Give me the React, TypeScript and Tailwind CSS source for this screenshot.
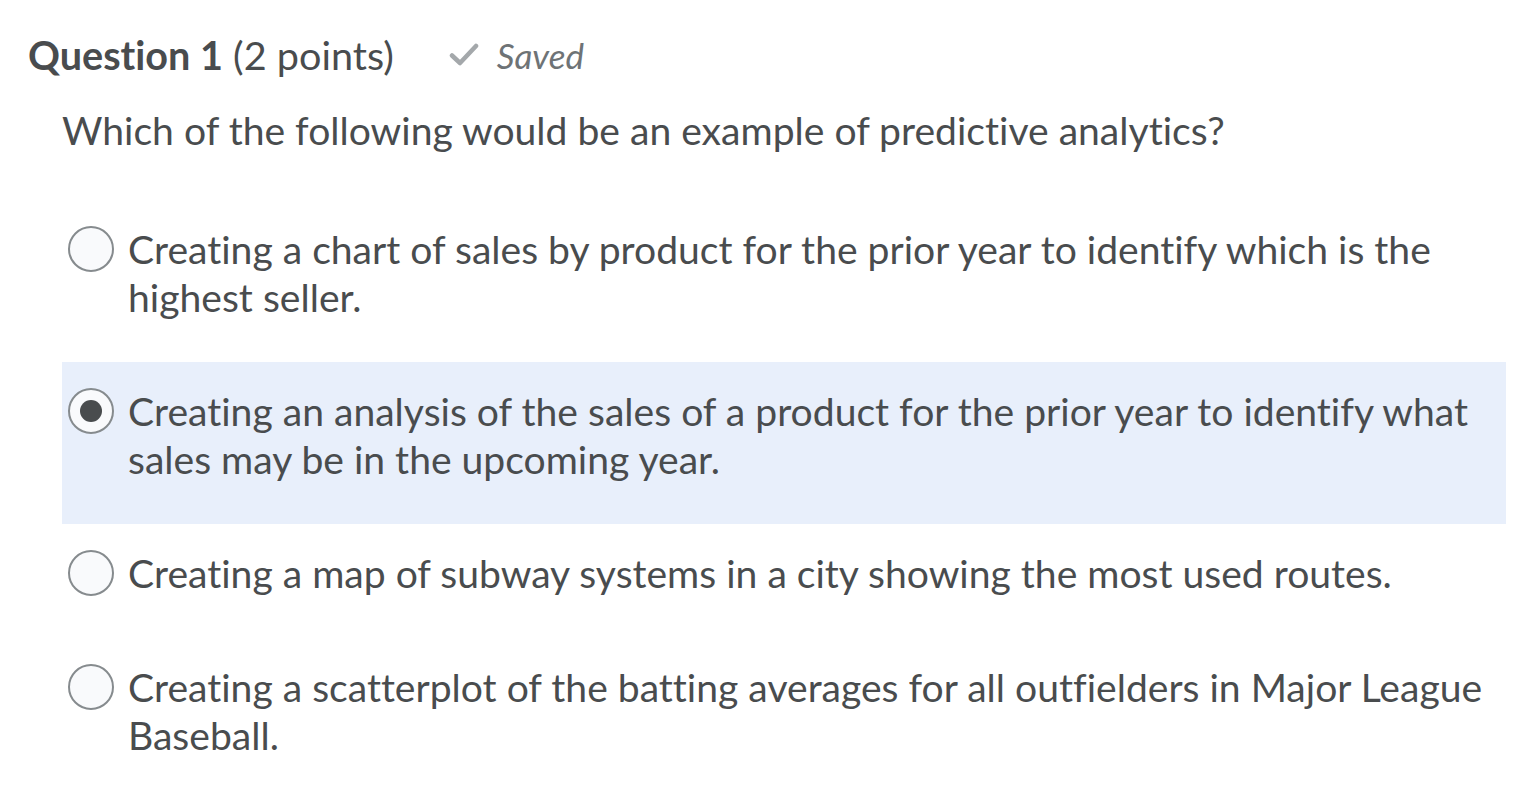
import { useState } from "react";

const options = [
  "Creating a chart of sales by product for the prior year to identify which is the highest seller.",
  "Creating an analysis of the sales of a product for the prior year to identify what sales may be in the upcoming year.",
  "Creating a map of subway systems in a city showing the most used routes.",
  "Creating a scatterplot of the batting averages for all outfielders in Major League Baseball.",
];

function Radio({ checked }: { checked: boolean }) {
  return (
    <span className="mt-[1px] flex h-[46px] w-[46px] shrink-0 items-center justify-center rounded-full border-2 border-[#868b8e] bg-[#f9fafc]">
      {checked && <span className="h-[22px] w-[22px] rounded-full bg-[#494c4e]" />}
    </span>
  );
}

export default function App() {
  const [selected, setSelected] = useState(1);

  return (
    <div className="min-h-screen bg-white font-['Lato',sans-serif] text-[#494c4e] [font-variant-ligatures:none]">
      <div className="px-[28px] pt-[29px]">
        <div className="flex items-center">
          <h2 className="text-[39.6px] leading-[48px]">
            <span className="font-bold">Question 1</span> (2 points)
          </h2>
          <span className="ml-[55px] flex items-center gap-[18px] text-[#6e7376]">
            <svg width="30" height="24" viewBox="0 0 30 24" fill="none">
              <path d="M3 12.5 L11 20 L27 3" stroke="#a4a8ab" strokeWidth="4.5" strokeLinecap="round" strokeLinejoin="round" />
            </svg>
            <span className="text-[35px] italic">Saved</span>
          </span>
        </div>

        <p className="mt-[24px] pl-[34px] text-[39.1px] leading-[48px]">
          Which of the following would be an example of predictive analytics?
        </p>

        <div className="mt-[46px] pl-[34px] pr-[2px]">
          {options.map((text, i) => (
            <label
              key={i}
              onClick={() => setSelected(i)}
              className={`flex cursor-pointer gap-[14px] pl-[6px] pr-[20px] pt-[25px] pb-[41px] ${
                selected === i ? "bg-[#e8effb]" : ""
              }`}
            >
              <Radio checked={selected === i} />
              <span className="text-[39.1px] leading-[48px]">{text}</span>
            </label>
          ))}
        </div>
      </div>
    </div>
  );
}
